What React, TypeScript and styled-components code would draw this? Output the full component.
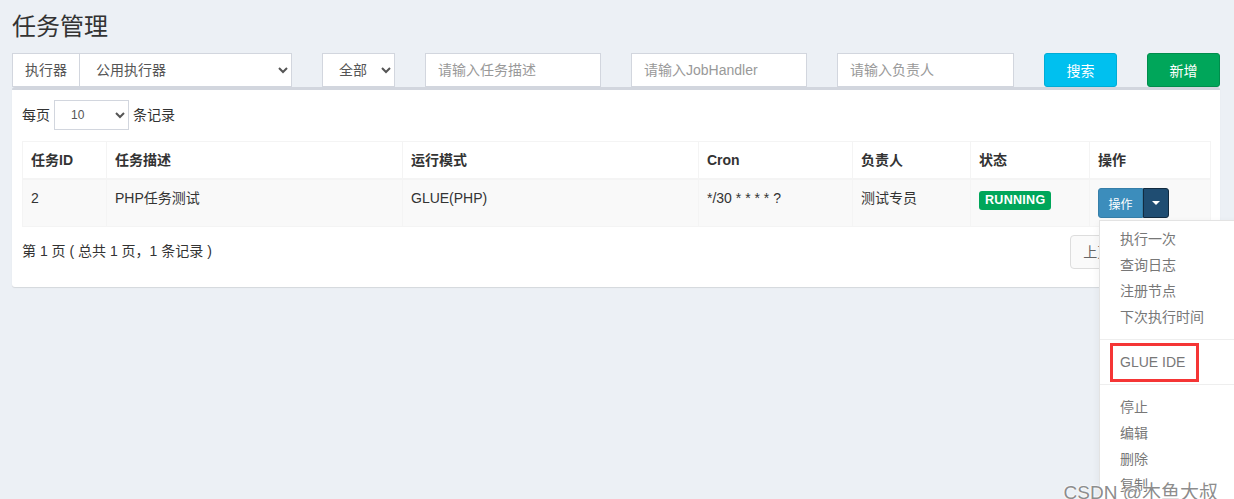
import React from "react";
import styled, { createGlobalStyle } from "styled-components";

const GlobalStyle = createGlobalStyle`
  html, body {
    margin: 0;
    padding: 0;
    background: #ecf0f5;
    overflow: hidden;
  }
  body {
    font-family: "Liberation Sans", "Noto Sans CJK SC", sans-serif;
    font-size: 14px;
    line-height: 20px;
    color: #333;
  }
  *, *::before, *::after { box-sizing: border-box; }
`;

const Page = styled.div`
  position: relative;
  width: 1234px;
  height: 499px;
  padding: 0 14px 0 12px;
`;

const Title = styled.h1`
  margin: 14px 0 13px;
  font-size: 24px;
  font-weight: 400;
  line-height: 26px;
  color: #333;
`;

const FilterRow = styled.div`
  display: grid;
  grid-template-columns: 280px 73px 176px 176px 177px 73px 73px;
  column-gap: 30px;
  height: 34px;
`;

const InputGroup = styled.div`
  display: flex;
  height: 34px;
`;

const Addon = styled.span`
  padding: 0 12px;
  border: 1px solid #d2d6de;
  border-right: none;
  background: #fff;
  line-height: 32px;
  color: #555;
  white-space: nowrap;
`;

const Select = styled.select<{ $small?: boolean }>`
  flex: 1;
  width: 100%;
  height: ${(p) => (p.$small ? 30 : 34)}px;
  padding: 0 8px 0 12px;
  border: 1px solid #d2d6de;
  border-radius: 0;
  background: #fff;
  color: #555;
  font-family: inherit;
  font-size: ${(p) => (p.$small ? 12 : 14)}px;
  outline: none;
`;

const Input = styled.input`
  height: 34px;
  width: 100%;
  padding: 0 12px;
  border: 1px solid #d2d6de;
  background: #fff;
  font-family: inherit;
  font-size: 14px;
  outline: none;
  &::placeholder { color: #999; }
`;

const Button = styled.button<{ $bg: string; $border: string }>`
  height: 34px;
  border: 1px solid ${(p) => p.$border};
  border-radius: 3px;
  background: ${(p) => p.$bg};
  color: #fff;
  font-family: inherit;
  font-size: 14px;
  cursor: pointer;
`;

const Card = styled.div`
  border-top: 3px solid #d2d6de;
  border-radius: 3px;
  background: #fff;
  box-shadow: 0 1px 1px rgba(0, 0, 0, 0.1);
  padding: 10px;
`;

const LengthRow = styled.div`
  display: flex;
  align-items: center;
  height: 30px;
  gap: 4px;
  color: #333;
`;

const LengthSelect = styled(Select)`
  flex: none;
  width: 75px;
`;

const Table = styled.table`
  margin-top: 11px;
  width: 1188px;
  table-layout: fixed;
  border-collapse: collapse;
  border: 1px solid #f4f4f4;
`;

const Th = styled.th`
  padding: 8px;
  text-align: left;
  font-weight: 700;
  line-height: 20px;
  border: 1px solid #f4f4f4;
  border-bottom-width: 2px;
`;

const Tr = styled.tr<{ $striped?: boolean }>`
  background: ${(p) => (p.$striped ? "#f9f9f9" : "#fff")};
`;

const Td = styled.td`
  padding: 8px;
  vertical-align: top;
  line-height: 20px;
  border: 1px solid #f4f4f4;
`;

const Label = styled.span`
  display: inline-block;
  margin-top: 3px;
  padding: 0 6px;
  border-radius: 3px;
  background: #00a65a;
  color: #fff;
  font-size: 12.5px;
  font-weight: 700;
  line-height: 19px;
  letter-spacing: 0.3px;
`;

const BtnGroup = styled.div`
  position: relative;
  display: inline-flex;
  vertical-align: top;
`;

const SmallBtn = styled.button<{ $dark?: boolean }>`
  height: 30px;
  width: ${(p) => (p.$dark ? 26 : 45)}px;
  padding: 0;
  border: 1px solid ${(p) => (p.$dark ? "#122b40" : "#367fa9")};
  border-radius: ${(p) => (p.$dark ? "0 3px 3px 0" : "3px 0 0 3px")};
  background: ${(p) => (p.$dark ? "#1f4d72" : "#3c8dbc")};
  color: #fff;
  font-family: inherit;
  font-size: 12px;
  white-space: nowrap;
  display: flex;
  align-items: center;
  justify-content: center;
`;

const Caret = styled.span`
  width: 0;
  height: 0;
  border-top: 4px solid #fff;
  border-left: 4px solid transparent;
  border-right: 4px solid transparent;
`;

const Menu = styled.ul`
  position: absolute;
  top: calc(100% + 2px);
  left: 1px;
  z-index: 10;
  margin: 0;
  min-width: 160px;
  padding: 5px 0;
  list-style: none;
  background: #fff;
  border: 1px solid #e3e3e3;
  box-shadow: 0 3px 8px rgba(0, 0, 0, 0.06);
`;

const MenuItem = styled.li<{ $marked?: boolean }>`
  position: relative;
  padding: 3px 20px;
  line-height: 20px;
  color: #777;
  white-space: nowrap;
  text-align: left;
  ${(p) =>
    p.$marked &&
    `&::after {
      content: "";
      position: absolute;
      left: 10px;
      top: -6px;
      width: 89px;
      height: 39px;
      border: 3px solid #f53535;
    }`}
`;

const Divider = styled.li`
  height: 1px;
  margin: 9px 0;
  background: #eee;
`;

const Footer = styled.div`
  display: flex;
  align-items: flex-start;
  justify-content: space-between;
  padding: 8px 0 0;
  height: 50px;
`;

const Info = styled.div`
  padding-top: 6px;
  color: #333;
`;

const Pagination = styled.ul`
  display: flex;
  margin: 0;
  padding: 0;
  list-style: none;
`;

const PageLink = styled.li<{ $first?: boolean; $last?: boolean; $active?: boolean }>`
  padding: 6px 12px;
  line-height: 20px;
  border: 1px solid #ddd;
  margin-left: ${(p) => (p.$first ? 0 : -1)}px;
  border-radius: ${(p) => (p.$first ? "4px 0 0 4px" : p.$last ? "0 4px 4px 0" : "0")};
  background: ${(p) => (p.$active ? "#3c8dbc" : "#fafafa")};
  color: ${(p) => (p.$active ? "#fff" : "#666")};
`;

const Watermark = styled.div`
  position: absolute;
  right: 16px;
  bottom: 8px;
  z-index: 20;
  font-size: 19px;
  line-height: 24px;
  color: rgba(110, 110, 110, 0.8);
  text-shadow: 0 0 2px #fff, 0 0 2px #fff;
  white-space: nowrap;
`;

const columns = ["任务ID", "任务描述", "运行模式", "Cron", "负责人", "状态", "操作"];
const widths = [84, 296, 296, 154, 118, 119, 121];

export default function App() {
  return (
    <Page>
      <GlobalStyle />
      <Title>任务管理</Title>
      <FilterRow>
        <InputGroup>
          <Addon>执行器</Addon>
          <Select defaultValue="1">
            <option value="1">公用执行器</option>
          </Select>
        </InputGroup>
        <Select defaultValue="all">
          <option value="all">全部</option>
        </Select>
        <Input placeholder="请输入任务描述" />
        <Input placeholder="请输入JobHandler" />
        <Input placeholder="请输入负责人" />
        <Button $bg="#00c0ef" $border="#00acd6">搜索</Button>
        <Button $bg="#00a65a" $border="#008d4c">新增</Button>
      </FilterRow>
      <Card>
        <LengthRow>
          <span>每页</span>
          <LengthSelect $small defaultValue="10">
            <option value="10">10</option>
          </LengthSelect>
          <span>条记录</span>
        </LengthRow>
        <Table>
          <colgroup>
            {widths.map((w, i) => (
              <col key={i} style={{ width: w }} />
            ))}
          </colgroup>
          <thead>
            <tr>
              {columns.map((c) => (
                <Th key={c}>{c}</Th>
              ))}
            </tr>
          </thead>
          <tbody>
            <Tr $striped>
              <Td>2</Td>
              <Td>PHP任务测试</Td>
              <Td>GLUE(PHP)</Td>
              <Td>*/30 * * * * ?</Td>
              <Td>测试专员</Td>
              <Td>
                <Label>RUNNING</Label>
              </Td>
              <Td>
                <BtnGroup>
                  <SmallBtn>操作</SmallBtn>
                  <SmallBtn $dark>
                    <Caret />
                  </SmallBtn>
                  <Menu>
                    <MenuItem>执行一次</MenuItem>
                    <MenuItem>查询日志</MenuItem>
                    <MenuItem>注册节点</MenuItem>
                    <MenuItem>下次执行时间</MenuItem>
                    <Divider />
                    <MenuItem $marked>GLUE IDE</MenuItem>
                    <Divider />
                    <MenuItem>停止</MenuItem>
                    <MenuItem>编辑</MenuItem>
                    <MenuItem>删除</MenuItem>
                    <MenuItem>复制</MenuItem>
                  </Menu>
                </BtnGroup>
              </Td>
            </Tr>
          </tbody>
        </Table>
        <Footer>
          <Info>第 1 页 ( 总共 1 页，1 条记录 )</Info>
          <Pagination>
            <PageLink $first>上页</PageLink>
            <PageLink $active>1</PageLink>
            <PageLink $last>下页</PageLink>
          </Pagination>
        </Footer>
      </Card>
      <Watermark>CSDN @木鱼大叔</Watermark>
    </Page>
  );
}
